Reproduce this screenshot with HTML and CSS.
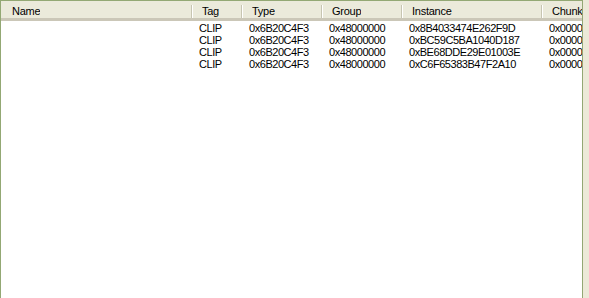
FILE: index.html
```html
<!DOCTYPE html>
<html lang="en">
<head>
    <meta charset="UTF-8">
    <title>Resource List</title>
    <link rel="stylesheet" href="styles.css">
</head>
<body>
    <div class="list-view">
        <div class="list-header">
            <div class="col col-name"><span>Name</span><i class="sep"></i></div>
            <div class="col col-tag"><span>Tag</span><i class="sep"></i></div>
            <div class="col col-type"><span>Type</span><i class="sep"></i></div>
            <div class="col col-group"><span>Group</span><i class="sep"></i></div>
            <div class="col col-instance"><span>Instance</span><i class="sep"></i></div>
            <div class="col col-chunk"><span>Chunk</span></div>
        </div>
        <div class="list-body">
            <div class="row">
                <div class="cell col-name"></div>
                <div class="cell col-tag">CLIP</div>
                <div class="cell col-type">0x6B20C4F3</div>
                <div class="cell col-group">0x48000000</div>
                <div class="cell col-instance">0x8B4033474E262F9D</div>
                <div class="cell col-chunk">0x00000000</div>
            </div>
            <div class="row">
                <div class="cell col-name"></div>
                <div class="cell col-tag">CLIP</div>
                <div class="cell col-type">0x6B20C4F3</div>
                <div class="cell col-group">0x48000000</div>
                <div class="cell col-instance">0xBC59C5BA1040D187</div>
                <div class="cell col-chunk">0x00000000</div>
            </div>
            <div class="row">
                <div class="cell col-name"></div>
                <div class="cell col-tag">CLIP</div>
                <div class="cell col-type">0x6B20C4F3</div>
                <div class="cell col-group">0x48000000</div>
                <div class="cell col-instance">0xBE68DDE29E01003E</div>
                <div class="cell col-chunk">0x00000000</div>
            </div>
            <div class="row">
                <div class="cell col-name"></div>
                <div class="cell col-tag">CLIP</div>
                <div class="cell col-type">0x6B20C4F3</div>
                <div class="cell col-group">0x48000000</div>
                <div class="cell col-instance">0xC6F65383B47F2A10</div>
                <div class="cell col-chunk">0x00000000</div>
            </div>
        </div>
    </div>
</body>
</html>
```

FILE: styles.css
```css
html, body {
    height: 100%;
}

body {
    margin: 0;
    background-color: #ece9d8;
    font-family: 'Liberation Sans', Arial, sans-serif;
    font-size: 11px;
    color: #000;
    overflow: hidden;
}

.list-view {
    width: 581px;
    height: 100%;
    background: #fff;
    border: 1px solid #93a874;
    border-bottom: none;
    overflow: hidden;
}

/* column header strip, XP style */
.list-header {
    display: flex;
    height: 17px;
    background: #ebeadb;
    border-style: solid;
    border-width: 0 0 3px 0;
    border-image: linear-gradient(#e2decd 0 33%, #d6d2c2 33% 66%, #cbc7b8 66%) 1;
}

.col {
    display: flex;
    align-items: flex-start;
    justify-content: space-between;
    box-sizing: border-box;
    height: 17px;
    padding-left: 9px;
    flex-shrink: 0;
    letter-spacing: -0.25px;
}

.col span {
    padding-top: 4px;
    line-height: 13px;
    white-space: nowrap;
    overflow: hidden;
}

.sep {
    width: 0;
    height: 13px;
    margin-top: 4px;
    border-left: 1px solid #c7c5b2;
    border-right: 1px solid #fff;
}

.col-name { width: 192px; }
.col-tag { width: 50px; }
.col-type { width: 80px; }
.col-group { width: 80px; }
.col-instance { width: 140px; }
.col-chunk { width: 39px; overflow: hidden; }

.list-header .col-name { padding-left: 11px; }

.list-body {
    padding-top: 1px;
}

.row {
    display: flex;
    height: 12px;
    line-height: 12px;
    letter-spacing: -0.45px;
}

.cell {
    box-sizing: border-box;
    padding-left: 6px;
    flex-shrink: 0;
    white-space: nowrap;
    overflow: hidden;
}
```
